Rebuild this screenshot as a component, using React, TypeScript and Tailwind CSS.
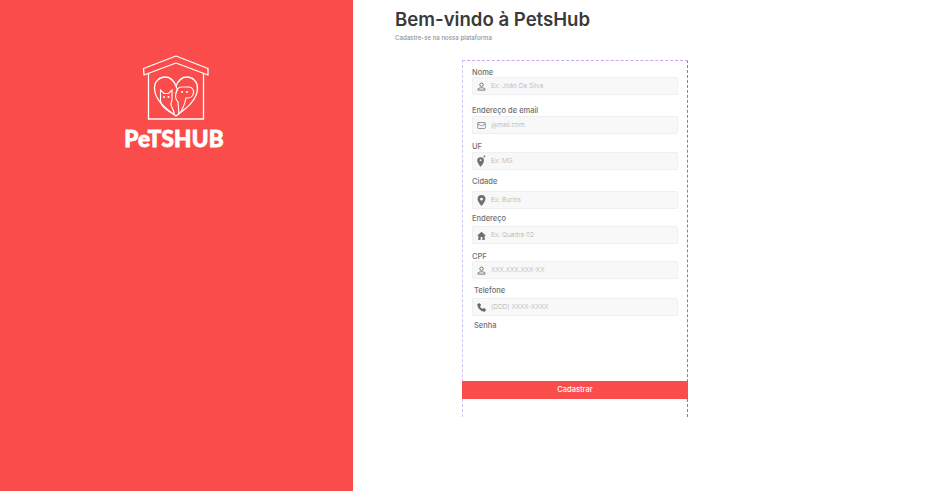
import { Mail, Phone } from "lucide-react";
import type { ReactNode } from "react";

const font = "font-['Inter','Liberation_Sans',sans-serif]";

function UserIcon() {
  return (
    <svg width="9" height="9" viewBox="0 0 10 10" fill="none" stroke="#777" strokeWidth="1.100">
      <circle cx="5" cy="3" r="1.900" />
      <path d="M1 9v-.6C1 7 3 6.400 5 6.400S9 7 9 8.400V9z" />
    </svg>
  );
}

function PinIcon() {
  return (
    <svg width="9" height="11" viewBox="0 0 10 12" fill="#707070">
      <path fillRule="evenodd" d="M5 0a4.400 4.400 0 0 1 4.400 4.400C9.400 7.400 5 12 5 12S.6 7.400.6 4.400A4.400 4.400 0 0 1 5 0zm0 2.900a1.600 1.600 0 1 0 0 3.200 1.600 1.600 0 0 0 0-3.200z" />
    </svg>
  );
}

function StateIcon() {
  return (
    <svg width="9" height="12" viewBox="0 0 10 13" fill="#707070">
      <path d="M4 2.400a3.700 3.700 0 0 1 3.700 3.700C7.700 8.600 4 13 4 13S.3 8.600.3 6.100A3.700 3.700 0 0 1 4 2.400z" />
      <circle cx="8.200" cy="1.400" r="1" />
      <circle cx="4" cy="5.600" r="1" fill="#f8f8f8" />
    </svg>
  );
}

function HomeIcon() {
  return (
    <svg width="9" height="9" viewBox="0 0 10 10" fill="#707070">
      <path d="M5 .8 10 5.400H8.500V10H6V6.800H4V10H1.500V5.400H0z" />
    </svg>
  );
}

function Field({
  label,
  icon,
  placeholder,
  className,
  labelClass,
}: {
  label: string;
  icon: ReactNode;
  placeholder: string;
  className: string;
  labelClass?: string;
}) {
  return (
    <div className={className}>
      <div className={`pt-[2px] text-[7.5px] leading-[8px] font-medium text-[#707070] ${labelClass ?? ""}`}>{label}</div>
      <div className="flex h-[18px] w-[206px] items-center rounded-[1px] border border-[#f0f0f0] bg-[#f8f8f8]">
        <div className="flex w-[18px] justify-center pr-[2px]">{icon}</div>
        <span className="mt-[1px] text-[6.5px] font-light text-[#b0b0b0]">{placeholder}</span>
      </div>
    </div>
  );
}

export default function App() {
  return (
    <div className={`flex h-[491px] w-[929px] bg-white ${font}`}>
      {/* lado esquerdo */}
      <div className="flex h-full w-[353px] flex-col items-center bg-[#fb4c4c] pt-[55px]">
        <svg width="68" height="66" viewBox="0 0 68 66" fill="none" stroke="#fff" strokeWidth="1.300" className="ml-[-1px]">
          <path d="M1.500 13.500 34 1l32 12.500V20L34 8 2 20z" strokeLinejoin="round" />
          <path d="M6.500 18v46h55V18" />
          <path d="M34 61C26 55 12.500 46 12.500 33c0-6.500 5-11 10.500-11 4.500 0 8.500 3 11 9 2.500-6 6.500-9 11-9 5.500 0 10.500 4.500 10.500 11C55.500 46 42 55 34 61z" />
          <path d="M32.500 59.500C25 56 19 52 18.500 46V35l3.500 3.500h4.500l3.500-3.500v9c0 3-1.500 3.500-1 6 .5 2.500 2.500 4 3.500 9.500" strokeWidth="1.100" />
          <path d="M36.500 59.500C37.500 55 36 52 36 47c-2-2-3-5-2-9 .5-4 3-6 6-6h7c3 0 5 3 4.500 6-.5 3-3 5-6 5h-1.500c-1 5-2.500 11-7.500 16.500" strokeWidth="1.100" />
          <path d="M34 31l1.500 4-1.500 3" strokeWidth="1" />
          <circle cx="22" cy="42" r=".4" fill="#fff" />
          <circle cx="26.500" cy="42" r=".4" fill="#fff" />
          <circle cx="40" cy="37" r=".4" fill="#fff" />
          <circle cx="45" cy="37" r=".4" fill="#fff" />
        </svg>
        <div className="mt-[5px] ml-[-5px] font-['Lato',sans-serif] text-[22.5px] leading-[25px] font-black tracking-[0.2px] text-white [-webkit-text-stroke:0.8px_white]">PeTSHUB</div>
      </div>

      {/* lado direito */}
      <div className="flex-1 pl-[42px]">
        <h1 className="mt-[7px] text-[18.6px] leading-[24px] font-semibold text-[#3a3a3a]">Bem-vindo à PetsHub</h1>
        <p className="mt-[2px] text-[6px] leading-[9px] font-medium tracking-[0.05px] text-[#909090]">Cadastre-se na nossa plataforma</p>

        <form className="mt-[18px] ml-[67px] h-[357px] w-[226px] border-x border-t border-dashed border-t-[#c9a8fb] border-r-[#9f63f3] border-l-[#d5c0f8]">
          <div className="pt-[6px] pl-[9px]">
            <Field label="Nome" icon={<UserIcon />} placeholder="Ex: João Da Silva" className="" />
            <Field label="Endereço de email" icon={<Mail size={9} color="#777" />} placeholder="@mail.com" className="mt-[10px]" labelClass="mb-[1px]" />
            <Field label="UF" icon={<StateIcon />} placeholder="Ex: MG" className="mt-[7px]" labelClass="mb-[1px]" />
            <Field label="Cidade" icon={<PinIcon />} placeholder="Ex: Buritis" className="mt-[6px]" labelClass="mb-[5px]" />
            <Field label="Endereço" icon={<HomeIcon />} placeholder="Ex: Quadra 02" className="mt-[4px]" labelClass="mb-[3px]" />
            <Field label="CPF" icon={<UserIcon />} placeholder="XXX.XXX.XXX-XX" className="mt-[7px]" />
            <Field label="Telefone" icon={<Phone size={9} color="#666" fill="#666" />} placeholder="(DDD) XXXX-XXXX" className="mt-[6px]" labelClass="mb-[3px] pl-[2px]" />
            <div className="mt-[4px] pt-[2px] pl-[2px] text-[7.5px] leading-[8px] font-medium text-[#707070]">Senha</div>
          </div>
          <button type="button" className="mx-[-1px] mt-[51px] h-[18px] w-[226px] bg-[#fb4c4c] text-[7.5px] font-medium text-white">
            Cadastrar
          </button>
        </form>
      </div>
    </div>
  );
}
